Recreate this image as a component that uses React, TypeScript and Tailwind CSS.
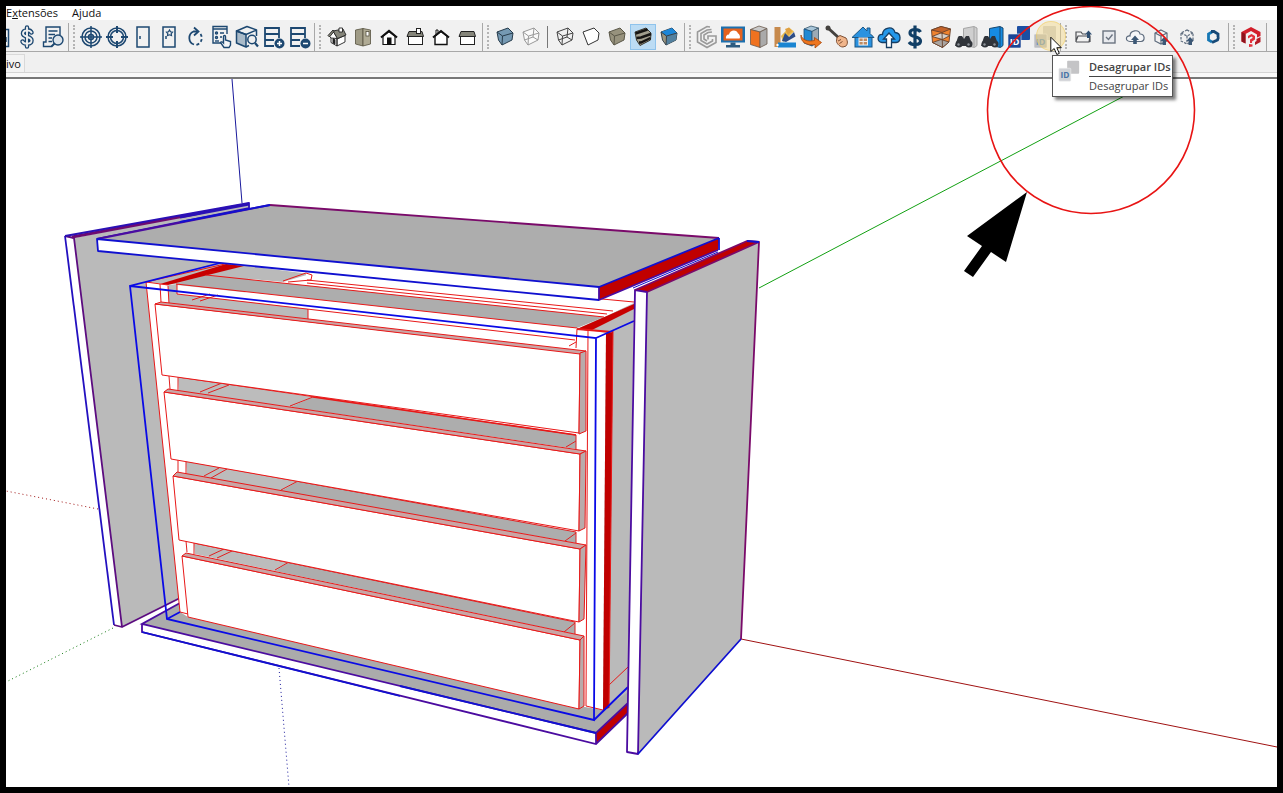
import type { ReactNode } from 'react'
import clsx from 'clsx'

const NAVY = '#1d4871'

interface Tool {
  label: string
  icon: ReactNode
  active?: boolean
}

const Cube = ({ fill, stroke, children }: { fill: string; stroke: string; children?: ReactNode }) => (
  <g stroke={stroke} strokeLinejoin="round">
    <path fill={fill} d="M5 8L16 4L21 9L20 16L10 21L6.500 16Z" />
    {children}
    <path fill="none" d="M5 8L10.500 12L21 9M10.500 12L10 21" />
  </g>
)

const Database = ({ children }: { children: ReactNode }) => (
  <g fill="none" stroke={NAVY} strokeWidth="1.800">
    <path d="M14 22H5V4H19V14M5 10H19M5 16H14" />
    <circle cx="19.500" cy="19.500" r="5" fill={NAVY} stroke="none" />
    <g stroke="#fff" strokeWidth="1.500">{children}</g>
  </g>
)

const Binoculars = ({ panel, edge }: { panel: string; edge: string }) => (
  <g>
    <path fill={panel} stroke={edge} d="M9.500 4.500L20 2.500L23 4V21.500L20.500 23.500L9.500 21Z" />
    <path fill="none" stroke={edge} d="M20 3V23" />
    <g fill="#30343a">
      <path d="M5 12H8L10 15V22H1L4 13Z" />
      <path d="M12 12H15L18 20V22H10V15Z" />
      <circle cx="5" cy="20" r="3.500" />
      <circle cx="15" cy="20" r="3.500" />
    </g>
    <g fill="#8d9299">
      <circle cx="4.500" cy="20.500" r="1.200" />
      <circle cx="14.500" cy="20.500" r="1.200" />
    </g>
  </g>
)

const IdBadges = ({ back, front, text }: { back: string; front: string; text: string }) => (
  <g>
    <rect x="11" y="2" width="13" height="14" rx="1" fill={back} />
    <rect x="2" y="10" width="13" height="14" rx="1" fill={front} stroke="#f0f0f0" strokeWidth=".6" />
    <text x="8.500" y="20.500" textAnchor="middle" fontSize="9" fontWeight="700" fill={text} className="font-['Open_Sans',sans-serif]">
      ID
    </text>
  </g>
)

const SmallCube = ({ dashed }: { dashed?: boolean }) => (
  <g fill="none" stroke="#5d6b7d" strokeWidth="1.200" strokeDasharray={dashed ? '2.500 1.200' : undefined}>
    <path d="M13 6L19 9V17L13 20L7 17V9Z" />
    <path d="M7 9L13 12L19 9M13 12V20" />
    <path fill="#3c5876" stroke="none" d="M16 13L20 17H18V21H14.500V17H12.500Z" />
  </g>
)

const modelTools: Tool[] = [
  {
    label: 'Orçamento',
    icon: (
      <g fill="none" strokeLinecap="round">
        <path stroke={NAVY} strokeWidth="4.500" d="M17.500 8.500C16 5.500 9 5.500 9 9.500C9 13.500 17.500 12 17.500 16.500C17.500 20.500 10 20.500 8.500 17.500M13 3.500V22.500" />
        <path stroke="#f0f0f0" strokeWidth="1.900" d="M17.500 8.500C16 5.500 9 5.500 9 9.500C9 13.500 17.500 12 17.500 16.500C17.500 20.500 10 20.500 8.500 17.500M13 3.500V22.500" />
      </g>
    ),
  },
  {
    label: 'Relatório',
    icon: (
      <g fill="none" stroke={NAVY} strokeWidth="1.400">
        <path d="M12 22.500H3.500V18H6V3H20V11M3.500 18V22.500" />
        <path d="M8.500 7H17.500M8.500 10.500H15M8.500 14H12M8.500 17.500H12" />
        <circle cx="18" cy="16" r="5" fill="#dbe3ea" />
        <path strokeWidth="2" d="M14.500 19.500L11.500 22.500" />
      </g>
    ),
  },
]

const insertTools: Tool[] = [
  {
    label: 'Alvo',
    icon: (
      <g fill="none" stroke={NAVY} strokeWidth="1.500">
        <circle cx="13" cy="13" r="9" />
        <circle cx="13" cy="13" r="6" />
        <circle cx="13" cy="13" r="2.500" />
        <path d="M13 2V24M2 13H24" />
      </g>
    ),
  },
  {
    label: 'Mira',
    icon: (
      <g fill="none" stroke={NAVY} strokeWidth="1.500">
        <circle cx="13" cy="13" r="9" />
        <circle cx="13" cy="13" r="6.500" />
        <path strokeWidth="2" d="M13 2V9M13 17V24M2 13H9M17 13H24" />
      </g>
    ),
  },
  {
    label: 'Porta',
    icon: (
      <g fill="none" stroke={NAVY} strokeWidth="1.500">
        <rect x="7" y="3" width="12" height="20" />
        <path d="M10 12V15" />
      </g>
    ),
  },
  {
    label: 'Porta favorita',
    icon: (
      <g fill="none" stroke={NAVY} strokeWidth="1.500">
        <rect x="7" y="3" width="12" height="20" />
        <path d="M10 12V15" />
        <path strokeWidth="1.200" d="M13.500 6L14.500 7.800L16.500 8.200L15.200 9.600L15.500 11.500L13.500 10.800L11.500 11.500L11.800 9.600L10.500 8.200L12.500 7.800Z" />
      </g>
    ),
  },
  {
    label: 'Girar',
    icon: (
      <g fill="none" stroke={NAVY} strokeWidth="1.800">
        <path d="M12 20.500A7 7 0 0 1 11.500 7.500H15" />
        <path d="M12 3.500L16.500 7.500L12 11.500" />
        <path strokeDasharray="3 2.200" d="M18.500 10A7 7 0 0 1 12.500 21" />
      </g>
    ),
  },
  {
    label: 'Selecionar itens',
    icon: (
      <g fill="none" stroke={NAVY} strokeWidth="1.400">
        <path d="M13 19H5V2.500H19V10" />
        <path d="M5 5H19M12 9H16M12 13H14" />
        <circle cx="8.500" cy="9" r="1" />
        <circle cx="8.500" cy="13.500" r="1" />
        <path d="M7 17H11" />
        <path fill="#f4f6f8" d="M15.500 19V12.500C15.500 11 17.500 11 17.500 12.500V16L22.500 17.500V21L21 23.500H16L12.500 18.500C13 17.300 14.500 18 15.500 19Z" />
      </g>
    ),
  },
  {
    label: 'Inspecionar peça',
    icon: (
      <g fill="none" stroke={NAVY} strokeWidth="1.500" strokeLinejoin="round">
        <path fill="#a9bac8" d="M2.500 7L12 10.500V23L2.500 19Z" />
        <path d="M2.500 7L13 2.500L22.500 6L12 10.500ZM22.500 6V12M12 23L15 21.500" />
        <circle cx="18" cy="15.500" r="4.200" fill="#f0f0f0" />
        <path strokeWidth="2.200" d="M21 19L24 22.500" />
      </g>
    ),
  },
  { label: 'Adicionar módulo', icon: <Database><path d="M19.500 17V22M17 19.500H22" /></Database> },
  { label: 'Remover módulo', icon: <Database><path d="M17 19.500H22" /></Database> },
]

const viewTools: Tool[] = [
  {
    label: 'Iso',
    icon: (
      <g stroke="#222" strokeWidth=".9" strokeLinejoin="round">
        <path fill="#fff" d="M7 11L13 15V22L7 18.500ZM13 15L21 11.500V18L13 22Z" />
        <path fill="#fff" d="M5 12L9 7L13.500 14.500L7 14Z" />
        <path fill="#85857a" d="M9 7L19 5L22 11L13.500 14.500Z" />
        <path fill="#85857a" d="M4 11.500L9 6L10 7.500L5.500 13Z" />
        <rect x="15" y="4" width="3.500" height="4" fill="#fff" />
        <path fill="#222" d="M9 14.500L11 15.500V20L9 19Z" />
      </g>
    ),
  },
  {
    label: 'Topo',
    icon: (
      <g stroke="#55523f" strokeWidth=".8">
        <path fill="#9f9b86" d="M5.500 6L13 4.500V22L5.500 20Z" />
        <path fill="#b0ab95" d="M13 4.500L20.500 6V20L13 22Z" />
        <rect x="16" y="7.500" width="3" height="4.500" fill="#fff" />
      </g>
    ),
  },
  {
    label: 'Frente',
    icon: (
      <g>
        <path fill="#fff" stroke="#111" strokeWidth="1.200" d="M7 12L13 7.500L19 12V20.500H7Z" />
        <path fill="none" stroke="#111" strokeWidth="2.200" d="M5 13.500L13 7L21 13.500" />
        <rect x="11" y="13.500" width="4.500" height="7.500" fill="#111" />
      </g>
    ),
  },
  {
    label: 'Direita',
    icon: (
      <g stroke="#222">
        <rect x="6.500" y="12" width="14" height="8.500" fill="#fff" />
        <path fill="#85857a" d="M7 7.500H20L21.500 12.500H5Z" />
        <rect x="14.500" y="4.500" width="4" height="5" fill="#fff" />
      </g>
    ),
  },
  {
    label: 'Trás',
    icon: (
      <g>
        <path fill="#fff" stroke="#111" d="M8 11V6H10V9" />
        <path fill="#fff" stroke="#111" strokeWidth="1.400" d="M7 12L13 7.500L19 12V20.500H7Z" />
        <path fill="none" stroke="#111" strokeWidth="2" d="M5 13.500L13 7L21 13.500" />
      </g>
    ),
  },
  {
    label: 'Esquerda',
    icon: (
      <g stroke="#222">
        <rect x="6.500" y="12" width="14" height="8.500" fill="#fff" />
        <path fill="#85857a" d="M7 7.500H20L21.500 12.500H5Z" />
      </g>
    ),
  },
]

const styleTools: Tool[] = [
  { label: 'Raio X', icon: <Cube fill="#7599b3" stroke="#273c4c" /> },
  { label: 'Arestas posteriores', icon: <Cube fill="#fafafa" stroke="#999"><path fill="none" d="M6.500 16L15 13L20 16M15 13L16 4" /></Cube> },
]

const faceTools: Tool[] = [
  { label: 'Aramado', icon: <Cube fill="none" stroke="#444"><path fill="none" d="M6.500 16L15 13L20 16M15 13L16 4" /></Cube> },
  {
    label: 'Linha oculta',
    icon: <path fill="#fff" stroke="#333" strokeLinejoin="round" d="M5 8L16 4L21 9L20 16L10 21Z" />,
  },
  { label: 'Sombreado', icon: <Cube fill="#97927d" stroke="#5a5748" /> },
  {
    label: 'Sombreado com texturas',
    active: true,
    icon: (
      <g>
        <path fill="#a19d8c" stroke="#3a3830" strokeLinejoin="round" d="M5 8L16 4L21 9L20.500 16L10 21.500L6.500 16Z" />
        <path fill="none" stroke="#161412" strokeWidth="2.400" d="M5.500 9.500L17.500 5.500M6.500 14L11 13.500L21 10M9 18.500L11 18.500L20.500 14" />
      </g>
    ),
  },
  {
    label: 'Monocromático',
    icon: (
      <Cube fill="#9b9680" stroke="#33404a">
        <path fill="#1c86d8" stroke="none" d="M5 8L16 4L21 9L10.500 12Z" />
        <path fill="#52809f" stroke="none" d="M10.500 12L21 9L20 16L10 21Z" />
      </Cube>
    ),
  },
]

const pluginTools: Tool[] = [
  {
    label: 'Gabster',
    icon: (
      <g fill="none" stroke="#9a9a9a" strokeWidth="1.600">
        <path d="M16 3L13 2.500L3.500 8V18L13 23.500L22 18.500V12H14V15.500" />
        <path d="M17.500 5.500L13 6L7 9.500V16.500L13 20L18.500 17V15" />
        <path d="M18 8L14 8.500L10 11V15L13 17" />
      </g>
    ),
  },
  {
    label: 'Renderizar',
    icon: (
      <g>
        <rect x="1" y="2.500" width="24" height="16" fill="#1b6fae" />
        <rect x="3.500" y="4.500" width="19" height="12" fill="#e6621c" />
        <path fill="#fff" d="M6 14.500C5.500 11 8 10.500 9 10.500C10 5.500 17 5.500 18 9.500C20 10 20.500 14 19.500 14.500Z" />
        <path fill="#2c5b80" d="M10.500 18.500H15.500V21H20V23.500H6V21H10.500Z" />
      </g>
    ),
  },
  {
    label: 'Módulo',
    icon: (
      <g stroke="#6b5a4e" strokeWidth=".8">
        <path fill="#c9c9c9" d="M4.500 5.500L13 2L21 4.500L14 8Z" />
        <path fill="#f0721f" d="M4.500 5.500L14 8V23.500L4.500 20.500Z" />
        <path fill="#aaa" d="M14 8L21 4.500V20L14 23.500Z" />
      </g>
    ),
  },
  {
    label: 'Materiais',
    icon: (
      <g>
        <rect x="2.500" y="3" width="6" height="20" fill="#c78a4d" />
        <path fill="#e8ba4f" d="M9 12L17 3.500L22 7.500L11 18Z" />
        <path fill="#2d4c85" d="M10 17L13 9L17 13L22 8L23.500 12.500L14 18Z" />
        <path fill="#e0a03f" d="M13 5L17 3.500L20 7L16 11Z" />
        <rect x="6" y="18.500" width="18" height="5" fill="#1a84d1" />
        <circle cx="5.500" cy="21" r="1.200" fill="#fff" />
      </g>
    ),
  },
  {
    label: 'Trocar módulo',
    icon: (
      <g strokeWidth=".8">
        <path fill="#a9c6d9" stroke="#36556b" d="M6 5L13 2L20.500 4L14 7.500Z" />
        <path fill="#2389d2" stroke="#1a5280" d="M6 5L14 7.500V22L6 19Z" />
        <path fill="#9caab5" stroke="#36556b" d="M14 7.500L20.500 4V18L14 22Z" />
        <path fill="#ee761f" stroke="#a8480b" d="M3 11C4 16 10 18 16.500 16.500V13.500L23.500 18.500L17 24V20.500C9 22 2 18 3 11Z" />
      </g>
    ),
  },
  {
    label: 'Ferragens',
    icon: (
      <g>
        <path stroke="#44413e" strokeWidth="3" d="M4 4L15 14" />
        <circle cx="4" cy="4" r="2.500" fill="#44413e" />
        <path fill="#f0b58b" stroke="#7d4e32" d="M13 13.500L16 11.500L22 14C24.500 18 23 21 22 22L19 23C15 23 12 18 12.500 17Z" />
        <path fill="none" stroke="#7d4e32" d="M14 17L17 15.500M15.500 19.500L18.500 17.500" />
      </g>
    ),
  },
  {
    label: 'Início',
    icon: (
      <g>
        <rect x="5" y="12" width="17" height="11" fill="#2a92e0" stroke="#1d5784" />
        <path fill="#2a92e0" stroke="#1d5784" d="M2 13.500L13 3L17 7V4H20V9.500L24 13.500Z" />
        <rect x="9" y="14" width="8.500" height="7" fill="#c08b62" stroke="#eee" />
        <path stroke="#eee" d="M13.200 14V21M9 17.500H17.500" />
      </g>
    ),
  },
  {
    label: 'Enviar',
    icon: (
      <g stroke="#173e63" strokeWidth="1.300">
        <path fill="#2598ea" d="M6 18.500C0 18 1.500 10 6.500 10.500C7 3 17 1.500 19 8.500C25.500 9 25.500 18 20 18.500Z" />
        <path fill="#fff" d="M13 9L18.500 15H15.500V23.500H10.500V15H7.500Z" />
      </g>
    ),
  },
  {
    label: 'Preço',
    icon: (
      <path fill="none" stroke="#113f66" strokeWidth="3.200" d="M18.500 8C16.500 4.500 8 4.500 8 9C8 14 18.500 11.500 18.500 17C18.500 21.500 9.500 21.500 7 18M13 1.500V24.500" />
    ),
  },
  {
    label: 'Caixa interna',
    icon: (
      <g stroke="#69432d" strokeWidth=".9">
        <path fill="#f0832f" d="M3.500 6L13 2.500L22.500 5L21 18L14.500 23.500L4.500 18.500Z" />
        <path fill="#d5cfca" d="M4 12.500L13 9L22 11.500L14.500 15.500Z" />
        <path fill="#c4632a" d="M3.500 6L14 8.500L22.500 5L13 2.500Z" />
        <path fill="#aaa5a1" d="M4.500 18.500L13 15.500L21 18L14.500 23.500Z" />
        <path d="M14 8.500L14.500 23.500" />
      </g>
    ),
  },
  { label: 'Buscar módulo', icon: <Binoculars panel="#cfcfcf" edge="#a5a5a5" /> },
  { label: 'Buscar painel', icon: <Binoculars panel="#168be2" edge="#17466d" /> },
  { label: 'Agrupar IDs', icon: <IdBadges back="#1c4fa3" front="#1a4698" text="#fff" /> },
  { label: 'Desagrupar IDs', icon: <IdBadges back="#cfcfcf" front="#bcbec2" text="#6d94bd" /> },
]

const shareTools: Tool[] = [
  {
    label: 'Abrir modelo',
    icon: (
      <g fill="none" stroke="#4d4f54" strokeWidth="1.200">
        <path d="M6 18V8H11L12.500 10H16M6 18H19L20 12H8L6 17M20 12V18" />
        <path fill="#2f4e70" stroke="none" d="M18.500 6.500L22 10.500H20V14H17V10.500H15Z" />
      </g>
    ),
  },
  {
    label: 'Validar',
    icon: (
      <g fill="none" stroke="#6b7480" strokeWidth="1.400">
        <rect x="7" y="7" width="12" height="12" fill="#e8eaee" />
        <path d="M10 13L12.500 15.500L16.500 10.500" />
      </g>
    ),
  },
  {
    label: 'Publicar na nuvem',
    icon: (
      <g fill="none" stroke="#5d6b7d" strokeWidth="1.200">
        <path fill="#f5f6f8" d="M8 17.500C3 17 3.500 11.500 8 12C8 6 17 5 18 10C23 10 23.500 17 19 17.500Z" />
        <path fill="#3c5876" stroke="none" d="M13 11.500L17 16H14.800V20H11.200V16H9Z" />
      </g>
    ),
  },
  { label: 'Enviar componente', icon: <SmallCube /> },
  { label: 'Receber componente', icon: <SmallCube dashed /> },
  {
    label: 'Sincronizar',
    icon: (
      <g fill="none" strokeWidth="2.800">
        <path stroke="#1678b5" d="M12 8L8.500 10V16L12 18" />
        <path stroke="#174a78" d="M11 7.500H14L18 10V13M18.500 13L17.500 16L12 18.500" />
      </g>
    ),
  },
]

const logoTools: Tool[] = [
  {
    label: 'Promob',
    icon: (
      <g>
        <path fill="#d21f2b" d="M3.500 8L13 3L22.500 8V12L19 13.500V10.500L13 7L7.500 10V19.500L3.500 17.500Z" />
        <path fill="#8f131c" d="M3.500 8L7.500 10V19.500L3.500 17.500Z" />
        <path fill="#e2313b" d="M10 12L13.500 10L17 12V15.500L14 17.500V19H12V15.500L14.500 14V13L13.500 12.500L10 14.500Z" />
        <path fill="#b51a25" d="M18.500 15L22.500 13V18L17 21V18L18.500 17Z" />
        <path fill="#e2313b" d="M11 20L14.500 20.500V22.500L11 23Z" />
      </g>
    ),
  },
]

const Tooltip = () => (
  <div role="tooltip" className="absolute left-5 top-[31px] z-20 flex h-[42px] w-[121px] gap-2 border border-[#555] bg-white pl-1 shadow-[3px_3px_3px_rgba(0,0,0,0.5)]">
    <svg viewBox="0 0 26 26" className="mt-[3px] h-6 w-6 shrink-0">
      <IdBadges back="#c4c4c6" front="#d0d2d6" text="#4673a6" />
    </svg>
    <div className="flex flex-col self-start whitespace-nowrap text-[11px] leading-[18px] text-[#444]">
      <span className="mt-[2px] border-b border-[#444] font-semibold">Desagrupar IDs</span>
      <span>Desagrupar IDs</span>
    </div>
  </div>
)

const ToolButton = ({ tool }: { tool: Tool }) => {
  const hovered = tool.label === 'Desagrupar IDs'
  return (
    <div className="relative">
      <button
        type="button"
        aria-label={tool.label}
        className={clsx('block h-[26px] w-[26px]', tool.active && 'bg-[#bcdcf4] outline -outline-offset-1 outline-[#8fc3ec]')}
      >
        <svg viewBox="0 0 26 26" className="h-[26px] w-[26px]">{tool.icon}</svg>
      </button>
      {hovered && (
        <>
          <span className="absolute -right-2 -top-[3px] h-[30px] w-[30px] rounded-full border border-[#f0c95a]/50 bg-[#f7d877]/40" />
          <Tooltip />
          <svg viewBox="0 0 13 20" className="absolute left-[18px] top-3 z-30 h-5 w-[13px]">
            <path fill="#fff" stroke="#111" d="M.8 1.200V15.500L4.200 12.500L6.800 18.500L9.300 17.400L6.800 11.700H11.300Z" />
          </svg>
        </>
      )}
    </div>
  )
}

const ToolGroup = ({ tools, children }: { tools: Tool[]; children?: ReactNode }) => (
  <div className="flex shrink-0 items-center border-r border-[#a8a8a8] pr-[2px]">
    <span className="ml-1 mr-[3px] h-6 w-[2px] border-l-2 border-dotted border-[#b4b4b4]" />
    {tools.map((tool) => <ToolButton key={tool.label} tool={tool} />)}
    {children}
  </div>
)

interface Drawer {
  front: string
  top: string
  side: string
}

const drawers: Drawer[] = [
  { front: '155,304 580,353 579,433 162,375', top: '155,304 161,302 586,351 580,354', side: '580,353 586,351 586,431 579,434' },
  { front: '164,392 580,454 579,531 171,459', top: '164,392 168,389 586,451 580,454', side: '580,454 586,451 585,528 579,531' },
  { front: '173,476 580,549 579,622 179,540', top: '173,476 177,472 586,545 580,549', side: '580,549 586,545 584,619 579,622' },
  { front: '182,556 580,640 579,709 188,617', top: '182,556 186,553 584,636 580,640', side: '580,640 584,636 584,706 579,709' },
]

// Openings seen between two drawer fronts: light part, dark part, cross lines
const gaps = [
  { light: '178,377 313,397 290,407 179,391', dark: '313,397 576,435 576,449 290,407', lines: 'M169 376L170 389M178 377V391M200 392L222 383M208 393L229 385M290 406L313 397M566 447L576 441' },
  { light: '186,461 298,481 281,491 187,474', dark: '298,481 576,532 576,543 281,491', lines: 'M178 460L178 472M186 461V474M204 476L219 468M211 478L227 469M281 490L298 481M565 541L576 533' },
  { light: '194,543 289,562 275,571 195,554', dark: '289,562 575,622 575,634 275,571', lines: 'M186 541L187 552M194 543V554M209 556L224 549M217 558L232 551M275 570L289 562M564 632L575 623' },
]

const Viewport = () => (
  <svg viewBox="6 79 1271 708" className="block w-full bg-white" role="img" aria-label="Modelo 3D do gaveteiro">
    {/* Axes */}
    <g fill="none">
      <path stroke="#1a1a9c" d="M232 79L242 203" />
      <path stroke="#1a1a9c" strokeDasharray="1 3" d="M279 668L289 787" />
      <path stroke="#12a012" d="M759 288L1130 93" />
      <path stroke="#127a12" strokeDasharray="1 3" d="M113 628L6 682" />
      <path stroke="#a01212" d="M741 639L1277 747" />
      <path stroke="#a01212" strokeDasharray="1 3" d="M98 509L6 491" />
    </g>

    {/* Left panel */}
    <polygon fill="#bababa" points="74,238 248,203 250,270 181,598 122,627" />
    <polygon fill="#fff" points="65,236 74,238 122,627 114,625" />
    <g fill="none" strokeWidth="1.800" strokeLinejoin="round">
      <path stroke="#2310c0" d="M65 236L114 625" />
      <path stroke="#5c0c80" d="M74 238L122 627L180 598M65 236L74 238M114 625L122 627" />
      <path stroke="#6d0a70" strokeWidth="3" d="M72 237L200 213" />
      <path stroke="#2a10b5" strokeWidth="3" d="M180 217L249 204" />
      <path stroke="#2a10b5" d="M65 236L249 203V208M97 239L250 208" />
    </g>

    {/* Bottom panel */}
    <polygon fill="#ababab" points="142,624 180,603 628,660 628,703 596,733" />
    <polygon fill="#fff" points="142,624 596,733 596,744 142,632" />
    <polygon fill="#c00000" points="596,733 628,703 628,713 596,744" />
    <g fill="none" strokeWidth="1.800">
      <path stroke="#4b0ca0" d="M180 603L142 624L596 733L628 703M142 624V632L596 744L628 713M596 733V744" />
      <path stroke="#1010d0" d="M142 632L400 696M400 686L596 733" />
    </g>

    {/* Carcass */}
    <polygon fill="#bababa" points="577,329 634,303 628,692 603,710" />
    <polygon fill="#fff" points="146,282 168,284 577,328 606,333 603,710 579,706 188,617 180,612" />
    <polygon fill="#bababa" points="168,284 240,265 310,274 283,282 206,275 176,283" />
    <polygon fill="#fff" points="306,272 600,298 634,302 605,317 306,283" />
    <polygon fill="#adadad" points="206,275 604,317 577,328 176,284" />
    <polygon fill="#bababa" points="168,285 177,285 177,294 308,309 308,319 169,303" />
    <polygon fill="#c80000" points="160,284 168,285 244,266 226,264" />
    <polygon fill="#c80000" points="577,329 590,331 634,309 634,304" />
    <polygon fill="#c00000" points="606,333 613,331 609,708 603,710" />
    <g fill="none" stroke="#e81818">
      <path d="M146 282L225 264M146 282L180 612L188 614M146 282L168 285M160 284L161 302M168 286L169 304" />
      <path d="M206 275L604 317M176 284L577 328M177 284V294L575 340M308 309V319" />
      <path d="M283 281L306 273L312 275L311 280L288 282M307 280L613 311M307 283L607 314M602 299L634 302" />
      <path d="M200 301L218 295M192 300L210 294M569 346L576 342" />
      <path strokeWidth="2" d="M577 329L612 332" />
      <path d="M577 329L576 348M588 331L586 706L603 710M609 685L628 667M613 331L609 708" />
    </g>

    {/* Drawers */}
    {gaps.map((gap) => (
      <g key={gap.light} stroke="#e02020">
        <polygon fill="#bcbcbc" points={gap.light} stroke="none" />
        <polygon fill="#adadad" points={gap.dark} stroke="none" />
        <polyline fill="none" points={gap.light.split(' ').slice(0, 1).concat(gap.dark.split(' ').slice(1, 3)).join(' ')} />
        <path fill="none" d={gap.lines} />
      </g>
    ))}
    {drawers.map((drawer) => (
      <g key={drawer.front} stroke="#e81818" strokeLinejoin="round">
        <polygon fill="#fff" points={drawer.front} />
        <polygon fill="#c9a5a5" points={drawer.top} />
        <polygon fill="#b9abab" points={drawer.side} />
      </g>
    ))}
    <path stroke="#e81818" strokeWidth="1.600" d="M313 397L576 435" />

    {/* Selection box */}
    <path
      fill="none"
      stroke="#0a0ae6"
      strokeWidth="1.800"
      d="M224 262L130 286L167 619L594 720L596 338L130 286M596 338L634 321M594 720L628 687M167 619L180 612"
    />

    {/* Right panel */}
    <polygon fill="#c00000" points="635,290 747,241 759,242 647,292" />
    <polygon fill="#fff" points="635,290 647,292 638,754 627,752" />
    <polygon fill="#bababa" points="647,292 759,242 741,639 638,754" />
    <g fill="none" strokeWidth="1.800" strokeLinejoin="round">
      <path stroke="#4b0ca0" d="M647 292L638 754L627 752L635 290L647 292" />
      <path stroke="#7a0a6a" d="M635 290L747 241L759 242L741 639M647 292L759 242" />
      <path stroke="#1010d0" d="M741 639L638 754M747 241L759 242" />
    </g>

    {/* Top panel */}
    <polygon fill="#adadad" points="97,239 270,205 719,238 599,287" />
    <polygon fill="#fff" points="97,239 599,287 599,300 98,251" />
    <polygon fill="#c00000" points="599,287 719,238 718,250 599,300" />
    <g fill="none" strokeWidth="1.800" strokeLinejoin="round">
      <path stroke="#7a0a6a" d="M270 205L719 238" />
      <path stroke="#4b0ca0" d="M97 239L270 205M599 287V300L718 250" />
      <path stroke="#1010d0" d="M180 222L270 205M719 238V250M719 238L599 287L97 239L98 251L599 300" />
      <path stroke="#1010d0" strokeWidth="1" d="M633 288L718 252" />
    </g>
  </svg>
)

const Annotation = () => (
  <svg viewBox="6 6 1271 781" className="pointer-events-none absolute left-0 top-0 z-10 w-full" aria-hidden="true">
    <circle cx="1091" cy="110" r="103.500" fill="none" stroke="#e81414" strokeWidth="1.600" />
    <polygon points="1027,192 967,236 982,246 964,271 973,277 991,252 1006,262" />
  </svg>
)

export default function App() {
  return (
    <div className="relative flex min-h-screen flex-col overflow-hidden border-[6px] border-black bg-white font-['Open_Sans','Noto_Sans',sans-serif] text-[#111]">
      <nav className="flex h-3.5 items-center gap-3.5 text-[11px] leading-[14px]">
        <a href="#extensoes">E<u>x</u>tensões</a>
        <a href="#ajuda">Ajuda</a>
      </nav>

      <div className="flex h-8 border-b border-[#a8a8a8] bg-[#f1f1f1] pt-[3px]">
        <div className="flex shrink-0 items-center border-r border-[#a8a8a8] pr-[2px]">
          <button type="button" aria-label="Documento" className="h-[26px] w-2">
            <svg viewBox="0 0 8 26" className="h-[26px] w-2">
              <path fill="none" stroke={NAVY} strokeWidth="1.500" d="M0 5.500H2.500V22.500H0M0 13V18" />
            </svg>
          </button>
          {modelTools.map((tool) => <ToolButton key={tool.label} tool={tool} />)}
        </div>
        <ToolGroup tools={insertTools} />
        <ToolGroup tools={viewTools} />
        <ToolGroup tools={styleTools}>
          <span className="mx-[3px] h-[22px] w-[2px] border-l border-[#777]" />
          {faceTools.map((tool) => <ToolButton key={tool.label} tool={tool} />)}
        </ToolGroup>
        <ToolGroup tools={pluginTools} />
        <ToolGroup tools={shareTools} />
        <ToolGroup tools={logoTools} />
      </div>

      <div className="flex h-[21px] items-end border-b border-[#d4d4d4] bg-[#f0f0f0]">
        <button type="button" className="h-[18px] w-[19px] border-r border-t border-[#d9d9d9] bg-[#f3f3f3] text-left text-[11px] leading-4">
          ivo
        </button>
      </div>
      <div className="h-1.5 border-b-2 border-[#777] bg-[#f8f8f8]" />

      <Viewport />
      <Annotation />
    </div>
  )
}
